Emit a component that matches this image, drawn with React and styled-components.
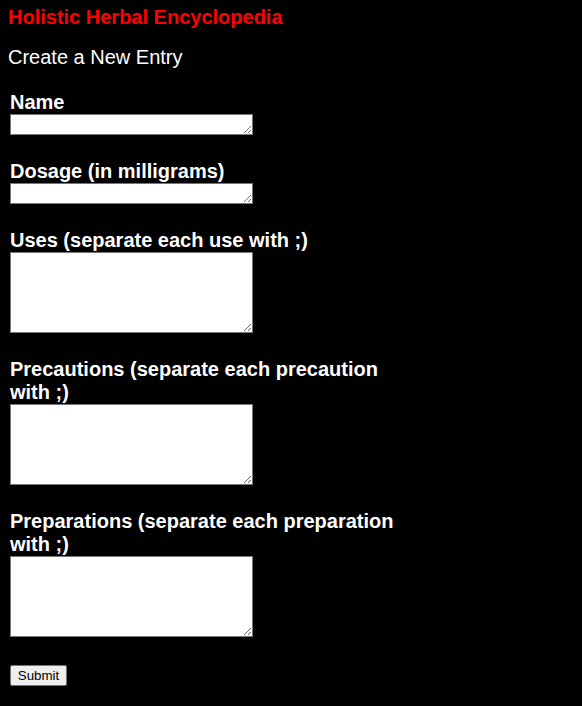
import React from 'react'
import styled, { createGlobalStyle } from 'styled-components'

const GlobalStyle = createGlobalStyle`
  html, body {
    margin: 0;
    background: #000;
  }
  body {
    padding: 8px;
    font-family: "Liberation Sans", Arial, sans-serif;
    color: #fff;
  }
`

const Title = styled.h1`
  margin: 0;
  font-size: 20px;
  line-height: 19px;
  font-weight: bold;
  color: #ff0000;
`

const SubTitle = styled.h2`
  margin: 19px 0 0;
  font-size: 20px;
  line-height: 23px;
  font-weight: normal;
  color: #fff;
`

const Form = styled.form`
  display: flex;
  flex-direction: column;
  align-items: flex-start;
  width: 400px;
  padding: 22px 0 0 2px;
`

const Field = styled.div`
  display: flex;
  flex-direction: column;
  align-items: flex-start;
  margin-bottom: 25px;
`

const Label = styled.label`
  font-size: 20px;
  line-height: 23px;
  font-weight: bold;
  color: #fff;
`

const TextArea = styled.textarea`
  box-sizing: border-box;
  width: 243px;
  height: ${({ $tall }) => ($tall ? '81px' : '21px')};
  margin: 0;
  padding: 2px;
  border: 1px solid #767676;
  border-radius: 0;
  background: #fff;
  font-family: "Liberation Mono", monospace;
  font-size: 13px;
`

const SubmitButton = styled.button`
  box-sizing: border-box;
  width: 57px;
  height: 21px;
  margin-top: 3px;
  padding: 0;
  border: 1px solid #767676;
  border-radius: 2px;
  background: #efefef;
  color: #000;
  font-family: "Liberation Sans", Arial, sans-serif;
  font-size: 13.33px;
`

const fields = [
  { id: 'name', label: 'Name' },
  { id: 'dosage', label: 'Dosage (in milligrams)' },
  { id: 'uses', label: 'Uses (separate each use with ;)', tall: true },
  { id: 'precautions', label: 'Precautions (separate each precaution with ;)', tall: true },
  { id: 'preparations', label: 'Preparations (separate each preparation with ;)', tall: true }
]

const App = () => {
  return (
    <>
      <GlobalStyle />
      <Title>Holistic Herbal Encyclopedia</Title>
      <SubTitle>Create a New Entry</SubTitle>
      <Form onSubmit={(e) => e.preventDefault()}>
        {fields.map((f) => (
          <Field key={f.id}>
            <Label htmlFor={f.id}>{f.label}</Label>
            <TextArea id={f.id} $tall={f.tall} />
          </Field>
        ))}
        <SubmitButton type="submit">Submit</SubmitButton>
      </Form>
    </>
  )
}

export default App
